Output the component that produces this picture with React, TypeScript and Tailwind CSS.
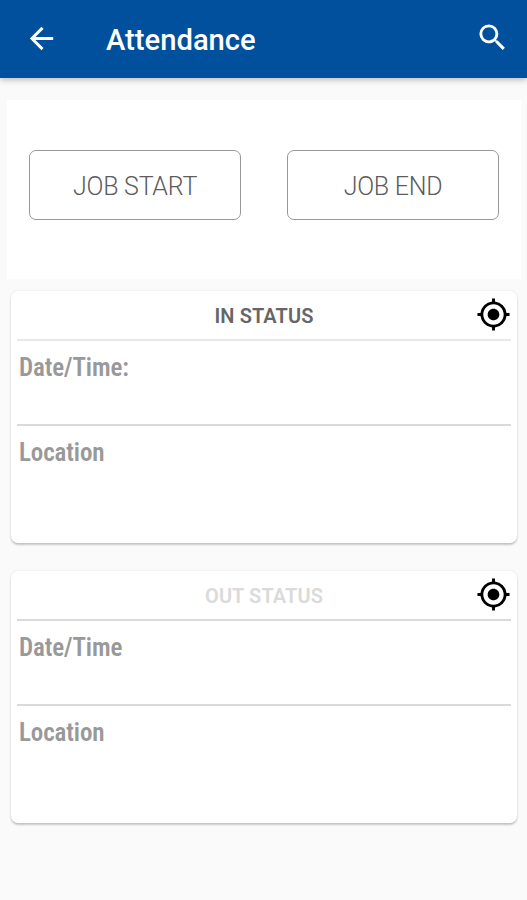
import React from 'react';
import { MdArrowBack, MdMyLocation, MdSearch } from 'react-icons/md';

interface StatusCardProps {
  title: string;
  titleClass: string;
  headerClass: string;
  dateLabel: string;
}

// ---------- Cards ----------

function FieldLabel({ children }: { children: React.ReactNode }) {
  return (
    <span className="block w-max pt-[10px] pl-[2px] font-['Roboto_Condensed',Roboto,sans-serif] text-[25px] leading-[34px] font-semibold tracking-[-0.1px] font-stretch-condensed text-[#999999]">
      {children}
    </span>
  );
}

function StatusCard({ title, titleClass, headerClass, dateLabel }: StatusCardProps) {
  return (
    <section className="h-[252px] rounded-[7px] bg-white px-[6px] shadow-[0_2px_2px_rgba(0,0,0,0.2),0_0_2px_rgba(0,0,0,0.1)]">
      <div className={`relative flex h-[50px] items-center justify-center ${headerClass}`}>
        <h2 className={`pt-[2px] text-[20px] font-semibold tracking-[0.1px] ${titleClass}`}>{title}</h2>
        <button aria-label="Locate" className="absolute top-[6px] right-0 text-black">
          <MdMyLocation size={35} />
        </button>
      </div>
      <div className="h-[85px] border-b-2 border-[#dadada]">
        <FieldLabel>{dateLabel}</FieldLabel>
      </div>
      <FieldLabel>Location</FieldLabel>
    </section>
  );
}

function JobButton({ children }: { children: React.ReactNode }) {
  return (
    <button className="h-[70px] w-[212px] rounded-[7px] border border-[#98989c] pt-[4px] text-[25px] font-[350] tracking-[-0.25px] text-[#5c5c5c]">
      {children}
    </button>
  );
}

// ---------- Screen ----------

export default function App() {
  return (
    <div className="flex h-[900px] w-[527px] flex-col overflow-hidden bg-[#fafafa] font-[Roboto,sans-serif]">
      <header className="flex h-[78px] shrink-0 items-center bg-[#01509d] pr-[17px] pl-[24px] text-white shadow-[0_2px_6px_rgba(0,0,0,0.25)]">
        <button aria-label="Back" className="-mt-[2px]">
          <MdArrowBack size={35} />
        </button>
        <h1 className="mt-[3px] ml-[47px] flex-1 text-[29.2px] font-medium">Attendance</h1>
        <button aria-label="Search" className="-mt-[3px]">
          <MdSearch size={35} />
        </button>
      </header>

      <div className="mt-[22px] mr-[6px] ml-[7px] flex h-[179px] shrink-0 justify-between bg-white px-[22px] pt-[50px]">
        <JobButton>JOB START</JobButton>
        <JobButton>JOB END</JobButton>
      </div>

      <main className="mt-[12px] mr-[10px] ml-[11px] flex flex-col gap-[28px]">
        <StatusCard
          title="IN STATUS"
          titleClass="text-[#666666]"
          headerClass="border-b-2 border-[#e9e9e9]"
          dateLabel="Date/Time:"
        />
        <StatusCard
          title="OUT STATUS"
          titleClass="text-[#dadada]"
          headerClass="border-b-2 border-[#dadada]"
          dateLabel="Date/Time"
        />
      </main>
    </div>
  );
}
